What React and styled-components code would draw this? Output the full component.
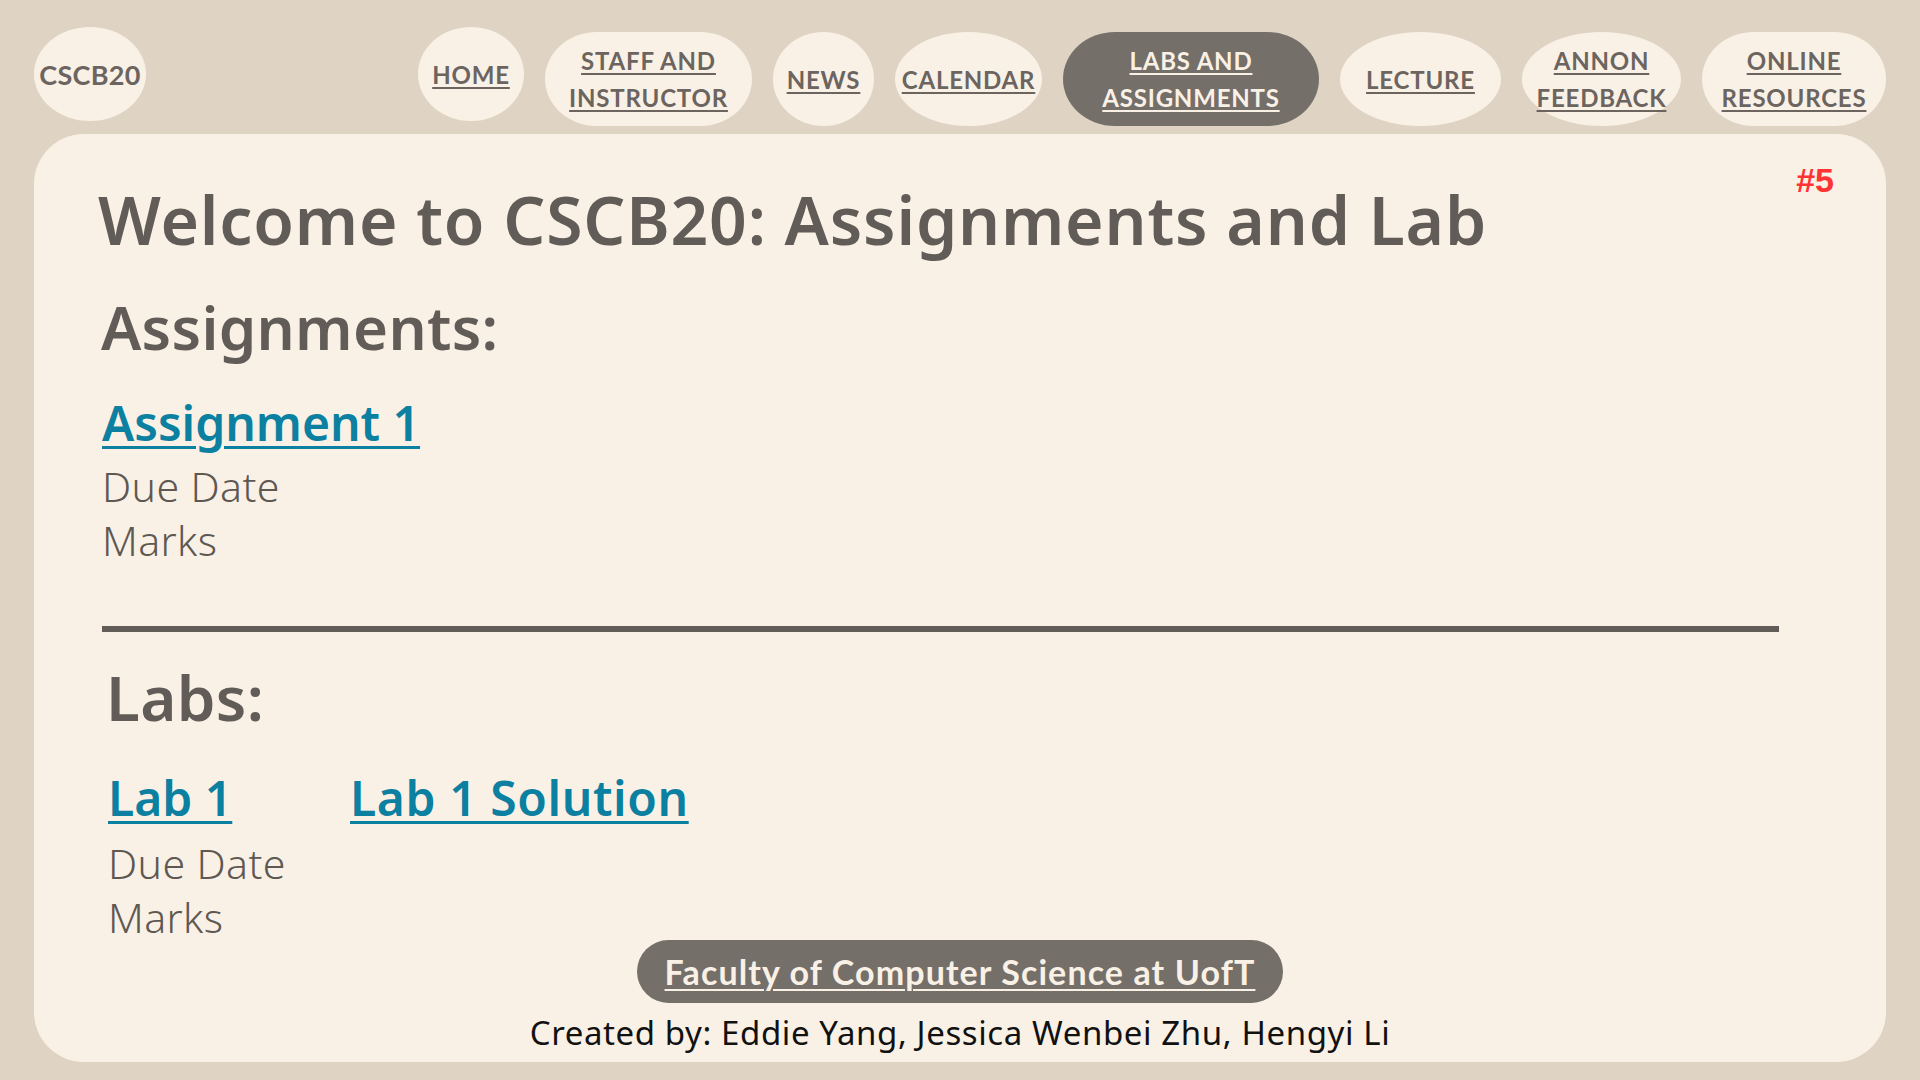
import React from "react";
import styled, { createGlobalStyle } from "styled-components";

const navItems = [
  { label: ["HOME"], width: 106, drop: false },
  { label: ["STAFF AND", "INSTRUCTOR"], width: 207, drop: true },
  { label: ["NEWS"], width: 101, drop: true },
  { label: ["CALENDAR"], width: 147, drop: true },
  { label: ["LABS AND", "ASSIGNMENTS"], width: 256, drop: true, active: true },
  { label: ["LECTURE"], width: 161, drop: true },
  { label: ["ANNON", "FEEDBACK"], width: 159, drop: true },
  { label: ["ONLINE", "RESOURCES"], width: 184, drop: true },
];

function App() {
  return (
    <>
      <GlobalStyle />
      <Page>
        <Nav>
          <Logo>CSCB20</Logo>
          <NavList>
            {navItems.map((item) => (
              <NavPill
                key={item.label.join(" ")}
                $width={item.width}
                $drop={item.drop}
                $active={item.active}
              >
                <NavLink href="#" $active={item.active}>
                  {item.label.map((line) => (
                    <span key={line}>{line}</span>
                  ))}
                </NavLink>
              </NavPill>
            ))}
          </NavList>
        </Nav>

        <Card>
          <Badge>#5</Badge>
          <Title>Welcome to CSCB20: Assignments and Lab</Title>

          <SectionTitle>Assignments:</SectionTitle>
          <Item>
            <ItemLink href="#">Assignment 1</ItemLink>
            <Meta>
              <div>Due Date</div>
              <div>Marks</div>
            </Meta>
          </Item>

          <Divider />

          <LabsBlock>
            <SectionTitle $labs>Labs:</SectionTitle>
            <LabRow>
              <Item $lab>
                <ItemLink href="#">Lab 1</ItemLink>
                <Meta $lab>
                  <div>Due Date</div>
                  <div>Marks</div>
                </Meta>
              </Item>
              <Item $lab>
                <ItemLink href="#">Lab 1 Solution</ItemLink>
              </Item>
            </LabRow>
          </LabsBlock>

          <Footer>
            <FacultyButton href="#">Faculty of Computer Science at UofT</FacultyButton>
            <Credits>Created by: Eddie Yang, Jessica Wenbei Zhu, Hengyi Li</Credits>
          </Footer>
        </Card>
      </Page>
    </>
  );
}

export default App;

const GlobalStyle = createGlobalStyle`
body{
  margin:0;
  background:#DFD3C3;
  font-family: "Noto Sans", "Open Sans", sans-serif;
}
`;

const Page = styled.div`
width:1920px;
height:1080px;
box-sizing:border-box;
padding:0 34px;
background:#DFD3C3;
overflow:hidden;
`;

const Nav = styled.nav`
display:flex;
justify-content:space-between;
align-items:flex-start;
padding-top:27px;
height:134px;
box-sizing:border-box;
`;

const Logo = styled.div`
width:112px;
height:94px;
border-radius:50%;
background:#FAF1E6;
display:flex;
align-items:center;
justify-content:center;
font-family:Lato, sans-serif;
font-size:27px;
font-weight:700;
letter-spacing:0.3px;
color:#6B645F;
`;

const NavList = styled.ul`
display:flex;
gap:21px;
list-style:none;
margin:0;
padding:0;
`;

const NavPill = styled.li`
width:${(p) => p.$width}px;
height:94px;
margin-top:${(p) => (p.$drop ? 5 : 0)}px;
border-radius:${(p) => (p.$width > 180 ? "52px / 47px" : "50%")};
background:${(p) => (p.$active ? "#756F6A" : "#FAF1E6")};
display:flex;
align-items:center;
justify-content:center;
`;

const NavLink = styled.a`
display:flex;
flex-direction:column;
align-items:center;
font-family:Lato, sans-serif;
font-size:24px;
font-weight:700;
letter-spacing:0.8px;
line-height:37px;
color:${(p) => (p.$active ? "#FAF1E6" : "#6B645F")};
text-decoration:none;
span{
  text-decoration:underline;
  text-decoration-thickness:2px;
  text-underline-offset:3px;
}
`;

const Card = styled.main`
position:relative;
height:928px;
box-sizing:border-box;
padding:52px 0 13px 64px;
background:#FAF1E6;
border-radius:50px;
display:flex;
flex-direction:column;
color:#615C57;
& > *{
  flex-shrink:0;
}
`;

const Badge = styled.div`
position:absolute;
top:29px;
right:52px;
font-family:"Liberation Sans", Arial, sans-serif;
font-weight:700;
font-size:34px;
line-height:1;
color:#FF3333;
`;

const Title = styled.h1`
margin:0;
font-size:66px;
line-height:1;
font-weight:600;
letter-spacing:0.8px;
`;

const SectionTitle = styled.h2`
margin:${(p) => (p.$labs ? "34px 0 0" : "45px 0 0 3px")};
font-size:${(p) => (p.$labs ? 62 : 60)}px;
line-height:1;
font-weight:600;
letter-spacing:0.3px;
`;

const Item = styled.div`
margin-top:${(p) => (p.$lab ? 46 : 42)}px;
padding-left:${(p) => (p.$lab ? 2 : 4)}px;
display:flex;
flex-direction:column;
`;

const ItemLink = styled.a`
font-size:48px;
line-height:1;
font-weight:600;
color:#0B80A0;
text-decoration:underline;
text-decoration-thickness:3px;
text-underline-offset:5px;
align-self:flex-start;
`;

const Meta = styled.div`
margin-top:${(p) => (p.$lab ? 14 : 12)}px;
font-size:41px;
line-height:54px;
font-weight:300;
letter-spacing:0.4px;
color:#5E5853;
`;

const Divider = styled.div`
margin:59px 0 0 4px;
width:1677px;
height:6px;
background:#615C57;
`;

const LabsBlock = styled.section`
padding-left:8px;
margin-bottom:-14px;
`;

const LabRow = styled.div`
display:grid;
grid-template-columns:242px auto;
align-items:start;
justify-content:start;
${Item}:last-child a{
  letter-spacing:0.6px;
}
`;

const Footer = styled.footer`
margin-top:auto;
margin-left:-64px;
display:flex;
flex-direction:column;
align-items:center;
gap:13px;
`;

const FacultyButton = styled.a`
height:63px;
box-sizing:border-box;
padding:0 28px;
border-radius:32px;
background:#756F6A;
display:flex;
align-items:center;
font-family:Lato, sans-serif;
font-size:34px;
font-weight:700;
letter-spacing:1.1px;
color:#FAF1E6;
text-decoration:underline;
text-decoration-thickness:2px;
text-underline-offset:4px;
`;

const Credits = styled.div`
font-size:33px;
line-height:1;
letter-spacing:0.6px;
color:#111111;
`;
